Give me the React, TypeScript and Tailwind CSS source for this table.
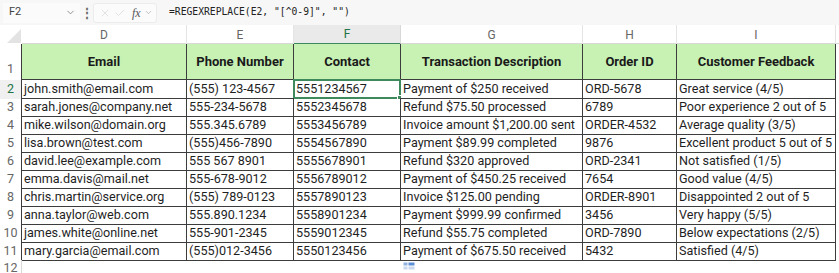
import { ChevronDown, X, Check } from "lucide-react";

const rows = [
  ["john.smith@email.com", "(555) 123-4567", "5551234567", "Payment of $250 received", "ORD-5678", "Great service (4/5)"],
  ["sarah.jones@company.net", "555-234-5678", "5552345678", "Refund $75.50 processed", "6789", "Poor experience 2 out of 5"],
  ["mike.wilson@domain.org", "555.345.6789", "5553456789", "Invoice amount $1,200.00 sent", "ORDER-4532", "Average quality (3/5)"],
  ["lisa.brown@test.com", "(555)456-7890", "5554567890", "Payment $89.99 completed", "9876", "Excellent product 5 out of 5"],
  ["david.lee@example.com", "555 567 8901", "5555678901", "Refund $320 approved", "ORD-2341", "Not satisfied (1/5)"],
  ["emma.davis@mail.net", "555-678-9012", "5556789012", "Payment of $450.25 received", "7654", "Good value (4/5)"],
  ["chris.martin@service.org", "(555) 789-0123", "5557890123", "Invoice $125.00 pending", "ORDER-8901", "Disappointed 2 out of 5"],
  ["anna.taylor@web.com", "555.890.1234", "5558901234", "Payment $999.99 confirmed", "3456", "Very happy (5/5)"],
  ["james.white@online.net", "555-901-2345", "5559012345", "Refund $55.75 completed", "ORD-7890", "Below expectations (2/5)"],
  ["mary.garcia@email.com", "(555)012-3456", "5550123456", "Payment of $675.50 received", "5432", "Satisfied (4/5)"],
];

const headers = ["Email", "Phone Number", "Contact", "Transaction Description", "Order ID", "Customer Feedback"];
const letters = ["D", "E", "F", "G", "H", "I"];
const cols = "grid grid-cols-[22px_165px_107px_107px_182px_94px_159px_3px]";

const App = () => {
  return (
    <div className="w-[839px] h-[273px] overflow-hidden bg-white text-[#1f1f1f] font-['Roboto',sans-serif]">
      {/* Formula bar */}
      <div className="h-[25px] bg-[#f7f7f7] flex items-center text-[#424242]">
        <div className="ml-[3px] w-[77px] h-[20px] bg-[#fbfbfb] flex items-center justify-between pl-[6px] pr-[4px] text-[11px]">
          <span>F2</span>
          <ChevronDown size={11} strokeWidth={1.5} className="text-[#666]" />
        </div>
        <div className="w-[13px] flex justify-center text-[#666] text-[12px] font-bold leading-none">⋮</div>
        <div className="w-[64px] h-[20px] bg-[#fbfbfb] border border-[#ececec] rounded-[3px] flex items-center gap-[3px] pl-[5px]">
          <X size={12} strokeWidth={1} className="text-[#c8c8c8]" />
          <Check size={12} strokeWidth={1} className="text-[#c8c8c8]" />
          <span className="ml-[3px] italic text-[12px] text-[#555] font-['Liberation_Serif',serif]">fx</span>
          <ChevronDown size={9} strokeWidth={1.5} className="text-[#999]" />
        </div>
        <div className="ml-[12px] text-[9.7px] font-['DejaVu_Sans_Mono',monospace] text-[#222]">
          =REGEXREPLACE(E2, "[^0-9]", "")
        </div>
      </div>

      {/* Column letters */}
      <div className={`${cols} h-[19px] text-[12px] text-[#666] border-b border-[#d8d8d8]`}>
        <div className="relative bg-white">
          <div className="absolute right-[1px] bottom-[1px] w-0 h-0 border-l-[14px] border-l-transparent border-b-[14px] border-b-[#e3e3e3]" />
        </div>
        {letters.map((l) => (
          <div
            key={l}
            className={
              l === "F"
                ? "flex items-center justify-center bg-[#eaeaea] text-[#217346] border-b-2 border-[#3f8a5c] -mb-px border-r border-r-[#d8d8d8]"
                : "flex items-center justify-center border-r border-[#e4e4e4]"
            }
          >
            {l}
          </div>
        ))}
        <div />
      </div>

      {/* Header row */}
      <div className={`${cols} h-[36px]`}>
        <div className="flex items-end justify-center pb-[1px] text-[12.5px] text-[#666] border-r border-[#3c3c3c]">1</div>
        {headers.map((h, i) => (
          <div
            key={h}
            className={
              "flex items-center justify-center bg-[#c8f2b4] font-bold text-[13px] text-[#1a1a1a] border-r border-b border-[#3c3c3c]" +
              (i === 2 ? " border-b-[#c8f2b4]" : "")
            }
          >
            {h}
          </div>
        ))}
        <div className="bg-white" />
      </div>

      {/* Data rows */}
      {rows.map((r, ri) => (
        <div key={ri} className={`${cols} h-[18px]`}>
          <div
            className={
              "flex items-center justify-center text-[12.5px] border-r border-[#3c3c3c] " +
              (ri === 0 ? "text-[#217346] bg-[#f0f0f0]" : "text-[#666]")
            }
          >
            {ri + 2}
          </div>
          {r.map((c, ci) => (
            <div
              key={ci}
              className="relative flex items-center pl-[2px] text-[12.6px] leading-none whitespace-nowrap border-r border-b border-[#3c3c3c]"
            >
              {c}
              {ri === 0 && ci === 2 && (
                <div className="absolute -left-px -top-px -right-px -bottom-px border-2 border-[#3f8a5c] pointer-events-none">
                  <div className="absolute -right-[3px] -bottom-[3px] w-[5px] h-[5px] bg-[#3f8a5c] border border-white" />
                </div>
              )}
            </div>
          ))}
          <div />
        </div>
      ))}

      {/* Row 12 */}
      <div className={`${cols} h-[18px]`}>
        <div className="flex items-start justify-center pt-[1px] text-[12.5px] leading-[14px] text-[#666] border-r border-[#d8d8d8]">12</div>
        <div />
        <div />
        <div />
        <div className="pl-[2px] pt-[2px]">
          <svg width="12" height="10" viewBox="0 0 12 10">
            <rect x="0.5" y="0.5" width="4" height="3" fill="#8fb3e0" />
            <rect x="5.5" y="0.5" width="6" height="3" fill="#5b8fd6" />
            <rect x="0.5" y="4.5" width="4" height="3" fill="#c7d8ef" />
            <rect x="5.5" y="4.5" width="6" height="3" fill="#c7d8ef" />
          </svg>
        </div>
      </div>
    </div>
  );
};

export default App;
